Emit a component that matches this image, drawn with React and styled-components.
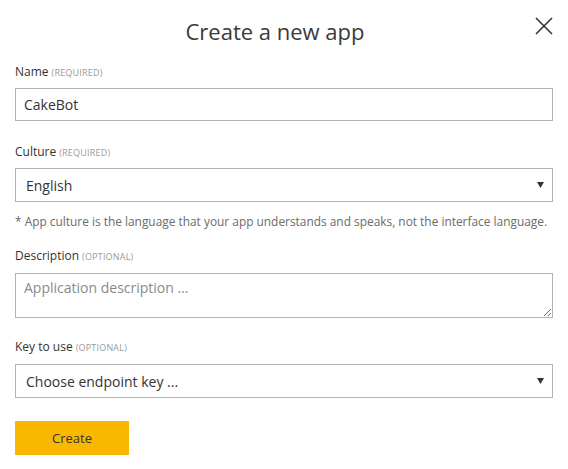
import styled, { createGlobalStyle } from 'styled-components';

const GlobalStyle = createGlobalStyle`
  body {
    margin: 0;
    background: #ffffff;
    font-family: 'Open Sans', 'Noto Sans', sans-serif;
    color: #333333;
  }
`;

const Dialog = styled.div`
  width: 568px;
  box-sizing: border-box;
  padding: 14px 15px 0 15px;
`;

const Header = styled.div`
  display: flex;
  align-items: flex-start;
`;

const Title = styled.h1`
  flex: 1;
  margin: 0;
  text-align: center;
  font-size: 22px;
  font-weight: 400;
  line-height: 34px;
  color: #3a3a3a;
`;

const CloseButton = styled.button`
  width: 18px;
  height: 18px;
  margin-top: 3px;
  padding: 0;
  border: none;
  background: none;
  color: #333333;
  display: flex;
  cursor: pointer;
`;

const Field = styled.div`
  margin-top: ${p => p.$top || 0}px;
`;

const Label = styled.div`
  display: flex;
  align-items: baseline;
  gap: 3px;
  height: 16px;
  font-size: 12px;
  line-height: 16px;
  color: #333333;
  margin-bottom: ${p => p.$gap || 8}px;
`;

const Hint = styled.span`
  font-size: 9px;
  line-height: 16px;
  color: #9a9a9a;
  text-transform: uppercase;
  letter-spacing: 0.2px;
`;

const TextInput = styled.input`
  display: block;
  width: 100%;
  height: 33px;
  box-sizing: border-box;
  border: 1px solid #b3b3b3;
  padding: 0 8px;
  font-family: inherit;
  font-size: 14px;
  color: #333333;
  outline: none;
`;

const TextArea = styled.textarea`
  display: block;
  width: 100%;
  height: 45px;
  box-sizing: border-box;
  border: 1px solid #b3b3b3;
  padding: 4px 8px;
  font-family: inherit;
  font-size: 14px;
  color: #333333;
  outline: none;
  resize: vertical;
  &::placeholder {
    color: #8a8a8a;
  }
`;

const Select = styled.div`
  display: flex;
  align-items: center;
  justify-content: space-between;
  height: 34px;
  box-sizing: border-box;
  border: 1px solid #b3b3b3;
  padding: 0 8px 0 10px;
  font-size: 14px;
  color: #333333;
  cursor: pointer;
`;

const Note = styled.div`
  margin-top: 11px;
  font-size: 11.9px;
  line-height: 16px;
  color: #6b6b6b;
`;

const CreateButton = styled.button`
  display: block;
  margin-top: 23px;
  width: 114px;
  height: 34px;
  border: none;
  background: #f8b800;
  font-family: inherit;
  font-size: 13px;
  color: #333333;
  cursor: pointer;
`;

function Caret() {
  return (
    <svg width="7" height="6" viewBox="0 0 7 6">
      <path d="M0 0 L7 0 L3.5 6 Z" fill="#333333" />
    </svg>
  );
}

function CloseIcon() {
  return (
    <svg width="18" height="18" viewBox="0 0 18 18">
      <path d="M1 1 L17 17 M17 1 L1 17" stroke="#333333" strokeWidth="1.6" />
    </svg>
  );
}

export default function App() {
  return (
    <>
      <GlobalStyle />
      <Dialog>
        <Header>
          <Title>Create a new app</Title>
          <CloseButton aria-label="Close"><CloseIcon /></CloseButton>
        </Header>

        <Field $top={16}>
          <Label>Name <Hint>(Required)</Hint></Label>
          <TextInput defaultValue="CakeBot" />
        </Field>

        <Field $top={23}>
          <Label>Culture <Hint>(Required)</Hint></Label>
          <Select>
            <span>English</span>
            <Caret />
          </Select>
          <Note>* App culture is the language that your app understands and speaks, not the interface language.</Note>
        </Field>

        <Field $top={19}>
          <Label $gap={9}>Description <Hint>(Optional)</Hint></Label>
          <TextArea placeholder="Application description ..." />
        </Field>

        <Field $top={21}>
          <Label $gap={9}>Key to use <Hint>(Optional)</Hint></Label>
          <Select>
            <span>Choose endpoint key ...</span>
            <Caret />
          </Select>
        </Field>

        <CreateButton>Create</CreateButton>
      </Dialog>
    </>
  );
}
